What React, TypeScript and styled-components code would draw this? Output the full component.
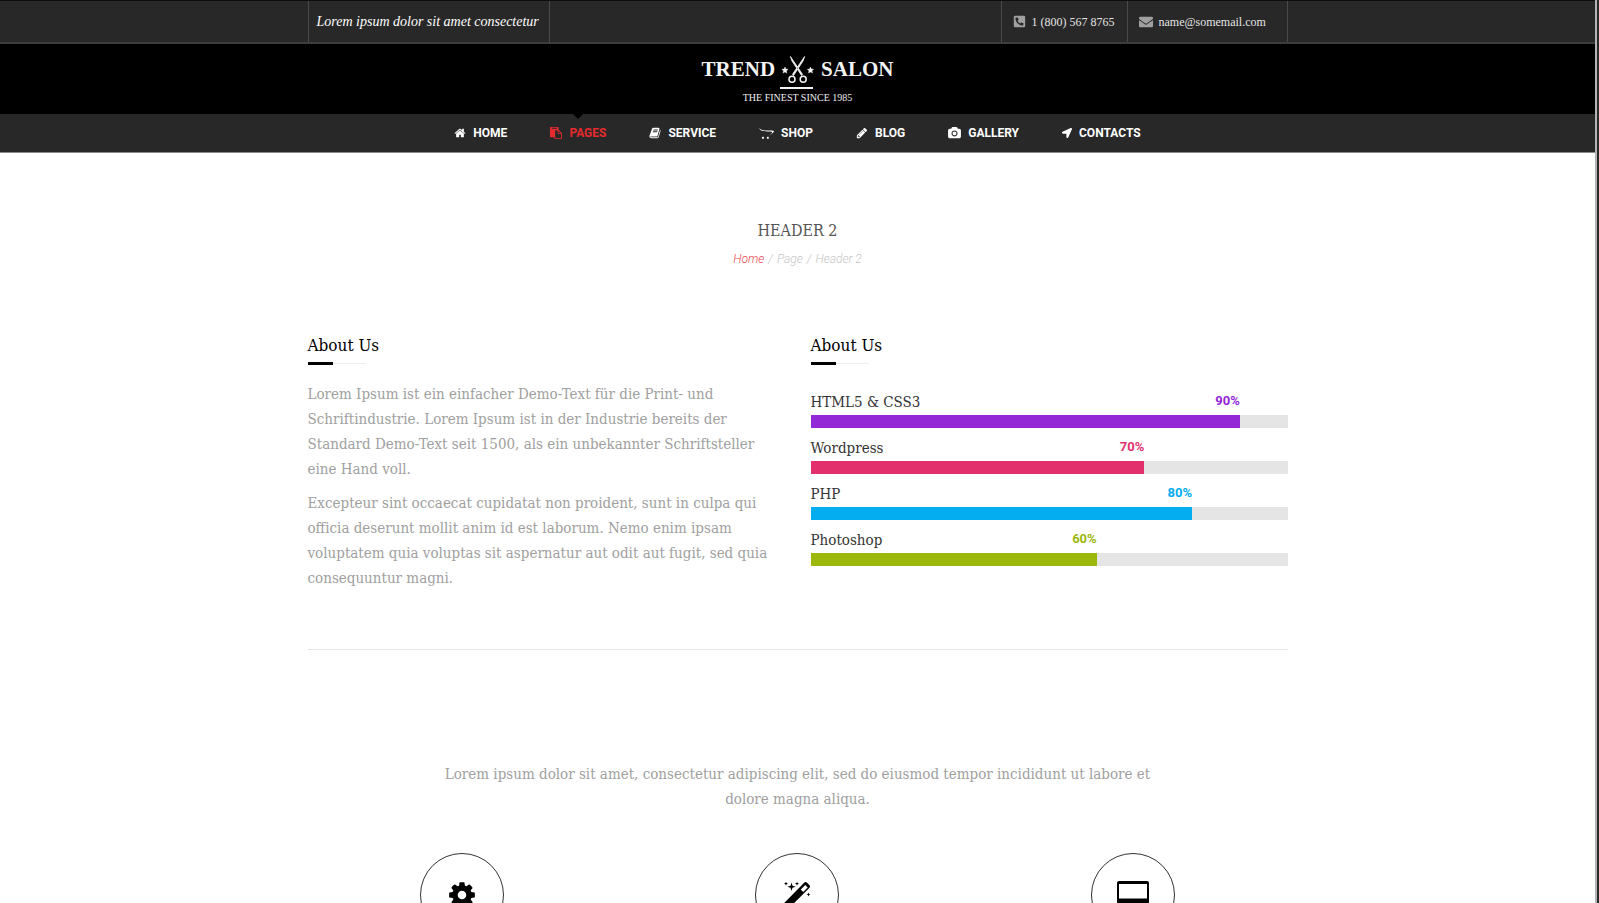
import React from 'react';
import styled, { createGlobalStyle } from 'styled-components';
import { FaPhoneSquareAlt, FaEnvelope, FaOpencart, FaLocationArrow } from 'react-icons/fa';

const slab = '"Roboto Slab", "DejaVu Serif Condensed", "DejaVu Serif", serif';
const sans = 'Roboto, "Liberation Sans", sans-serif';

const GlobalStyle = createGlobalStyle`
  * { box-sizing: border-box; }
  body { margin: 0; background: #fff; font-family: ${slab}; }
  h1, h2, p, ul, ol { margin: 0; padding: 0; font-weight: 400; }
  ul, ol { list-style: none; }
  a { color: inherit; text-decoration: none; }
  svg { display: block; flex: none; }
`;

const Shell = styled.div`
  display: flex;
  height: 100vh;
  overflow: hidden;
`;
const Page = styled.div`
  flex: 1;
  min-width: 0;
`;
const Edge = styled.div`
  width: 4px;
  border-left: 2px solid #b4b4b4;
  background: #2b2b2b;
`;
const Container = styled.div`
  width: 100%;
  max-width: 980px;
  margin: 0 auto;
`;

const TopBar = styled.div`
  background: #282828;
  border-top: 1px solid #0c0c0c;
  border-bottom: 2px solid #3c3c3c;
`;
const TopInner = styled(Container)`
  display: flex;
  height: 41px;
`;
const Tagline = styled.p`
  display: flex;
  align-items: center;
  padding: 0 8px;
  min-width: 242px;
  border: solid #4a4a4a;
  border-width: 0 1px;
  font: italic 14px/20px "Liberation Serif", serif;
  color: #fff;
`;
const ContactList = styled.address`
  display: flex;
  margin-left: auto;
  border-right: 1px solid #4a4a4a;
  font-style: normal;
`;
const ContactLink = styled.a<{ $width: number }>`
  display: flex;
  align-items: center;
  gap: 6px;
  min-width: ${(p) => p.$width}px;
  padding: 0 11px;
  border-left: 1px solid #4a4a4a;
  font: 12px/16px "Roboto Slab", "Liberation Serif", serif;
  color: #e4e4e4;
  svg { color: #a0a0a0; }
`;

const LogoBand = styled.header`
  display: flex;
  flex-direction: column;
  align-items: center;
  height: 70px;
  padding-top: 11px;
  background: #000;
`;
const LogoRow = styled.a`
  display: flex;
  font: bold 21px/28px "Liberation Serif", serif;
  color: #f4f4f4;
`;
const LogoSub = styled.p`
  font: 10px/14px "Liberation Serif", serif;
  color: #eee;
`;

const Nav = styled.nav`
  background: #282828;
  border-bottom: 1px solid #8a8a8a;
`;
const NavList = styled.ul`
  display: flex;
  justify-content: center;
  gap: 43px;
  height: 38px;
`;
const NavLink = styled.a<{ $active?: boolean }>`
  position: relative;
  display: flex;
  align-items: center;
  gap: 7px;
  height: 100%;
  font: bold 12px/16px ${sans};
  color: ${(p) => (p.$active ? '#e62a2e' : '#fff')};
  &::before {
    content: '';
    display: ${(p) => (p.$active ? 'block' : 'none')};
    position: absolute;
    top: 0;
    left: 50%;
    margin-left: -5px;
    border: 5px solid transparent;
    border-top-color: #000;
    border-bottom: 0;
  }
`;

const Main = styled.main`
  padding-top: 65px;
`;
const PageTitle = styled.h1`
  font-size: 16px;
  line-height: 26px;
  text-align: center;
  color: #555;
`;
const Crumbs = styled.ol`
  display: flex;
  justify-content: center;
  gap: 4px;
  margin: 5px 0 63px;
  font: italic 300 12px/20px ${sans};
  color: #c6c6c6;
  a { color: #e8494d; }
`;
const Columns = styled.div`
  display: grid;
  grid-template-columns: 1fr 1fr;
  gap: 26px;
  padding-bottom: 58px;
  border-bottom: 1px solid #e5e5e5;
`;
const SectionTitle = styled.h2`
  margin-bottom: 17px;
  font-size: 17px;
  line-height: 26px;
  color: #000;
  &::after {
    content: '';
    display: block;
    width: 58px;
    height: 3px;
    margin-top: 4px;
    background: linear-gradient(#000, #000) 0 0 / 25px 100% no-repeat,
      linear-gradient(#eee, #eee) 0 1px / 100% 1px no-repeat;
  }
`;
const Copy = styled.p`
  font-size: 15px;
  line-height: 25px;
  color: #a0a0a0;
  & + & { margin-top: 9px; }
`;
const Intro = styled(Copy)`
  margin: 112px 0 41px;
  text-align: center;
`;
const Line = styled.span`
  display: block;
  white-space: nowrap;
`;

const Skill = styled.li`
  display: grid;
  padding-top: 8px;
`;
const SkillName = styled.span`
  grid-area: 1 / 1;
  font-size: 15px;
  line-height: 25px;
  color: #333;
`;
const SkillValue = styled.span<{ $color: string }>`
  grid-area: 1 / 1;
  text-align: right;
  font: bold 13px/22px ${sans};
  color: ${(p) => p.$color};
`;
const Track = styled.div`
  height: 13px;
  background: #e5e5e5;
`;
const Fill = styled.div<{ $color: string }>`
  height: 100%;
  background: ${(p) => p.$color};
`;
const SkillList = styled.ul``;

const Features = styled.ul`
  display: grid;
  grid-template-columns: repeat(3, 1fr);
  max-width: 1007px;
  margin: 0 auto;
  justify-items: center;
`;
const Disc = styled.li`
  display: grid;
  place-items: center;
  width: 84px;
  height: 84px;
  border: 1px solid #333;
  border-radius: 50%;
  color: #000;
`;

type GlyphProps = { d: string; w?: number; size: number; box?: number };
const Glyph = ({ d, w = 1792, size, box = 1792 }: GlyphProps) => (
  <svg width={size} height={Math.round((size * box) / w)} viewBox={`0 0 ${w} ${box}`} fill="currentColor" aria-hidden="true">
    <path d={d} />
  </svg>
);

const HOME = 'M1472 992v480q0 26-19 45t-45 19h-384v-384h-256v384h-384q-26 0-45-19t-19-45v-480q0-1 .5-3t.5-3l575-474 575 474q1 2 1 6zm223-69l-62 74q-8 9-21 11h-3q-13 0-21-7l-692-577-692 577q-12 8-24 7-13-2-21-11l-62-74q-8-10-7-23.5t11-21.5l719-599q32-26 76-26t76 26l244 204v-195q0-14 9-23t23-9h192q14 0 23 9t9 23v408l219 182q10 8 11 21.5t-7 23.5z';
const PASTE = 'M768 1664h896v-640h-416q-40 0-68-28t-28-68v-416h-384v1152zm256-1440v-64q0-13-9.5-22.5t-22.5-9.5h-704q-13 0-22.5 9.5t-9.5 22.5v64q0 13 9.5 22.5t22.5 9.5h704q13 0 22.5-9.5t9.5-22.5zm256 672h299l-299-299v299zm512 128v672q0 40-28 68t-68 28h-960q-40 0-68-28t-28-68v-160h-544q-40 0-68-28t-28-68v-1344q0-40 28-68t68-28h1088q40 0 68 28t28 68v328q21 13 36 28l408 408q28 28 48 76t20 88z';
const BOOK = 'M1703 478q40 57 18 129l-275 906q-19 64-76.5 107.5t-122.5 43.5h-923q-77 0-148.5-53.5t-99.5-131.5q-24-67-2-127 0-4 3-27t4-37q1-8-3-21.5t-3-19.5q2-11 8-21t16.5-23.5 16.5-23.5q23-38 45-91.5t30-91.5q3-10 .5-30t-.5-28q3-11 17-28t17-23q21-36 42-92t25-90q1-9-2.5-32t.5-28q4-13 22-30.5t22-22.5q19-26 42.5-84.5t27.5-96.5q1-8-3-25.5t-2-26.5q2-8 9-18t18-23 17-21q8-12 16.5-30.5t15-35 16-36 19.5-32 26.5-23.5 36-11.5 47.5 5.5l-1 3q38-9 51-9h761q74 0 114 56t18 130l-274 906q-36 119-71.5 153.5t-128.5 34.5h-869q-27 0-38 15-11 16-1 43 24 70 144 70h923q29 0 56-15.5t35-41.5l300-987q7-22 5-57 38 15 59 43zm-1064 2q-4 13 2 22.5t20 9.5h608q13 0 25.5-9.5t16.5-22.5l21-64q4-13-2-22.5t-20-9.5h-608q-13 0-25.5 9.5t-16.5 22.5zm-83 256q-4 13 2 22.5t20 9.5h608q13 0 25.5-9.5t16.5-22.5l21-64q4-13-2-22.5t-20-9.5h-608q-13 0-25.5 9.5t-16.5 22.5z';
const PENCIL = 'M491 1536l91-91-235-235-91 91v107h128v128h107zm523-928q0-22-22-22-10 0-17 7l-542 542q-7 7-7 17 0 22 22 22 10 0 17-7l542-542q7-7 7-17zm-54-192l416 416-832 832h-416v-416zm683 96q0 53-37 90l-166 166-416-416 166-165q36-38 90-38 53 0 91 38l235 234q37 39 37 91z';
const CAMERA = 'M960 672q119 0 203.5 84.5t84.5 203.5-84.5 203.5-203.5 84.5-203.5-84.5-84.5-203.5 84.5-203.5 203.5-84.5zm704-416q106 0 181 75t75 181v896q0 106-75 181t-181 75h-1408q-106 0-181-75t-75-181v-896q0-106 75-181t181-75h224l51-136q19-49 69.5-84.5t103.5-35.5h512q53 0 103.5 35.5t69.5 84.5l51 136h224zm-704 1152q185 0 316.5-131.5t131.5-316.5-131.5-316.5-316.5-131.5-316.5 131.5-131.5 316.5 131.5 316.5 316.5 131.5z';
const COG = 'M1152 896q0-106-75-181t-181-75-181 75-75 181 75 181 181 75 181-75 75-181zm512-109v222q0 12-8 23t-20 13l-185 28q-19 54-39 91 35 50 107 138 10 12 10 25t-9 23q-27 37-99 108t-94 71q-12 0-26-9l-138-108q-44 23-91 38-16 136-29 186-7 28-36 28h-222q-14 0-24.5-8.5t-11.5-21.5l-28-184q-49-16-90-37l-141 107q-10 9-25 9-14 0-25-11-126-114-165-168-7-10-7-23 0-12 8-23 15-21 51-66.5t54-70.5q-27-50-41-99l-183-27q-13-2-21-12.5t-8-23.5v-222q0-12 8-23t19-13l186-28q14-46 39-92-40-57-107-138-10-12-10-24 0-10 9-23 26-36 98.5-107.5t94.5-71.5q13 0 26 10l138 107q44-23 91-38 16-136 29-186 7-28 36-28h222q14 0 24.5 8.5t11.5 21.5l28 184q49 16 90 37l142-107q9-9 24-9 13 0 25 10 129 119 165 170 7 8 7 22 0 12-8 23-15 21-51 66.5t-54 70.5q26 50 41 98l183 28q13 2 21 12.5t8 23.5z';

const Scissors = () => (
  <svg width="46" height="36" viewBox="0 0 46 36" fill="none" stroke="#f4f4f4" aria-hidden="true">
    <path d="M15.4 1.5 17 6l9.5 14.5 1-1.2zM29.6 1.5 28 6l-9.5 14.5-1-1.2z" fill="#f4f4f4" strokeWidth=".8" />
    <circle cx="17" cy="24.2" r="3" strokeWidth="1.5" />
    <circle cx="28.2" cy="24.2" r="3" strokeWidth="1.5" />
    <path d="m10 12 .9 2.1 2.3.2-1.7 1.5.5 2.3-2-1.2-2 1.2.5-2.3-1.7-1.5 2.3-.2zM35.5 12l.9 2.100 2.300.2-1.700 1.500.5 2.300-2-1.200-2 1.200.5-2.300-1.700-1.500 2.300-.2z" fill="#f4f4f4" strokeWidth=".4" />
    <path d="M5 33h33" strokeWidth="2" />
  </svg>
);
const Wand = () => (
  <svg width="28" height="28" viewBox="0 0 28 28" fill="#000" aria-hidden="true">
    <path fillRule="evenodd" d="M.6 22.600 21.400 1.600q1.200-1 2.400 0l2.700 2.700q1 1.200 0 2.400L5.600 27.500q-1.200 1-2.400 0L.6 25q-1-1.200 0-2.400zM17.800 8.500l2.400 2.400 4.500-4.500-2.400-2.400z" />
    <path d="m8.500 1.500 1 3.200 3.200 1-3.200 1-1 3.200-1-3.200-3.200-1 3.200-1zM3 .7l.6 1.400 1.400.6-1.400.6L3 4.700l-.6-1.400L1 2.700l1.400-.6zM14 .7l.6 1.400 1.400.6-1.400.6-.6 1.400-.6-1.400-1.400-.6 1.400-.6zM25.500 11.500l.6 1.400 1.400.6-1.400.6-.6 1.400-.6-1.400-1.400-.6 1.400-.6z" />
  </svg>
);
const Desktop = () => (
  <svg width="32" height="28" viewBox="0 0 32 28" fill="#000" aria-hidden="true">
    <path fillRule="evenodd" d="M2 0h28q2 0 2 2v19q0 2-2 2H20v3h3v2H9v-2h3v-3H2q-2 0-2-2V2q0-2 2-2zm0 3v14.500h28V3z" />
  </svg>
);

const navItems = [
  { label: 'HOME', icon: <Glyph d={HOME} size={12} /> },
  { label: 'PAGES', icon: <Glyph d={PASTE} size={12} />, active: true },
  { label: 'SERVICE', icon: <Glyph d={BOOK} size={12} /> },
  { label: 'SHOP', icon: <FaOpencart size={15} /> },
  { label: 'BLOG', icon: <Glyph d={PENCIL} size={12} /> },
  { label: 'GALLERY', icon: <Glyph d={CAMERA} w={1920} size={13} /> },
  { label: 'CONTACTS', icon: <FaLocationArrow size={10} /> },
];

const skills = [
  { name: 'HTML5 & CSS3', value: 90, color: '#9228d6' },
  { name: 'Wordpress', value: 70, color: '#e1306c' },
  { name: 'PHP', value: 80, color: '#03adf0' },
  { name: 'Photoshop', value: 60, color: '#9cb80c' },
];

const Lines = ({ text }: { text: string[] }) => (
  <>{text.map((t) => <Line key={t}>{t} </Line>)}</>
);

export default function App() {
  return (
    <Shell>
      <GlobalStyle />
      <Page>
        <TopBar>
          <TopInner>
            <Tagline>Lorem ipsum dolor sit amet consectetur</Tagline>
            <ContactList>
              <ContactLink $width={126} href="tel:18005678765">
                <FaPhoneSquareAlt size={13} />1 (800) 567 8765
              </ContactLink>
              <ContactLink $width={160} href="mailto:name@somemail.com">
                <FaEnvelope size={14} />name@somemail.com
              </ContactLink>
            </ContactList>
          </TopInner>
        </TopBar>
        <LogoBand>
          <LogoRow href="#home"><span>TREND</span><Scissors /><span>SALON</span></LogoRow>
          <LogoSub>THE FINEST SINCE 1985</LogoSub>
        </LogoBand>
        <Nav>
          <NavList>
            {navItems.map((n) => (
              <li key={n.label}>
                <NavLink href={`#${n.label.toLowerCase()}`} $active={n.active}>{n.icon}{n.label}</NavLink>
              </li>
            ))}
          </NavList>
        </Nav>
        <Main>
          <PageTitle>HEADER 2</PageTitle>
          <Crumbs>
            <li><a href="#home">Home</a></li>
            <li>/</li>
            <li>Page</li>
            <li>/</li>
            <li>Header 2</li>
          </Crumbs>
          <Container>
            <Columns>
              <section>
                <SectionTitle>About Us</SectionTitle>
                <Copy>
                  <Lines text={[
                    'Lorem Ipsum ist ein einfacher Demo-Text für die Print- und',
                    'Schriftindustrie. Lorem Ipsum ist in der Industrie bereits der',
                    'Standard Demo-Text seit 1500, als ein unbekannter Schriftsteller',
                    'eine Hand voll.',
                  ]} />
                </Copy>
                <Copy>
                  <Lines text={[
                    'Excepteur sint occaecat cupidatat non proident, sunt in culpa qui',
                    'officia deserunt mollit anim id est laborum. Nemo enim ipsam',
                    'voluptatem quia voluptas sit aspernatur aut odit aut fugit, sed quia',
                    'consequuntur magni.',
                  ]} />
                </Copy>
              </section>
              <section>
                <SectionTitle>About Us</SectionTitle>
                <SkillList>
                  {skills.map((s) => (
                    <Skill key={s.name}>
                      <SkillName>{s.name}</SkillName>
                      <SkillValue $color={s.color} style={{ width: `${s.value}%` }}>{s.value}%</SkillValue>
                      <Track><Fill $color={s.color} style={{ width: `${s.value}%` }} /></Track>
                    </Skill>
                  ))}
                </SkillList>
              </section>
            </Columns>
            <Intro>
              <Lines text={[
                'Lorem ipsum dolor sit amet, consectetur adipiscing elit, sed do eiusmod tempor incididunt ut labore et',
                'dolore magna aliqua.',
              ]} />
            </Intro>
          </Container>
          <Features>
            <Disc><Glyph d={COG} size={30} /></Disc>
            <Disc><Wand /></Disc>
            <Disc><Desktop /></Disc>
          </Features>
        </Main>
      </Page>
      <Edge />
    </Shell>
  );
}
